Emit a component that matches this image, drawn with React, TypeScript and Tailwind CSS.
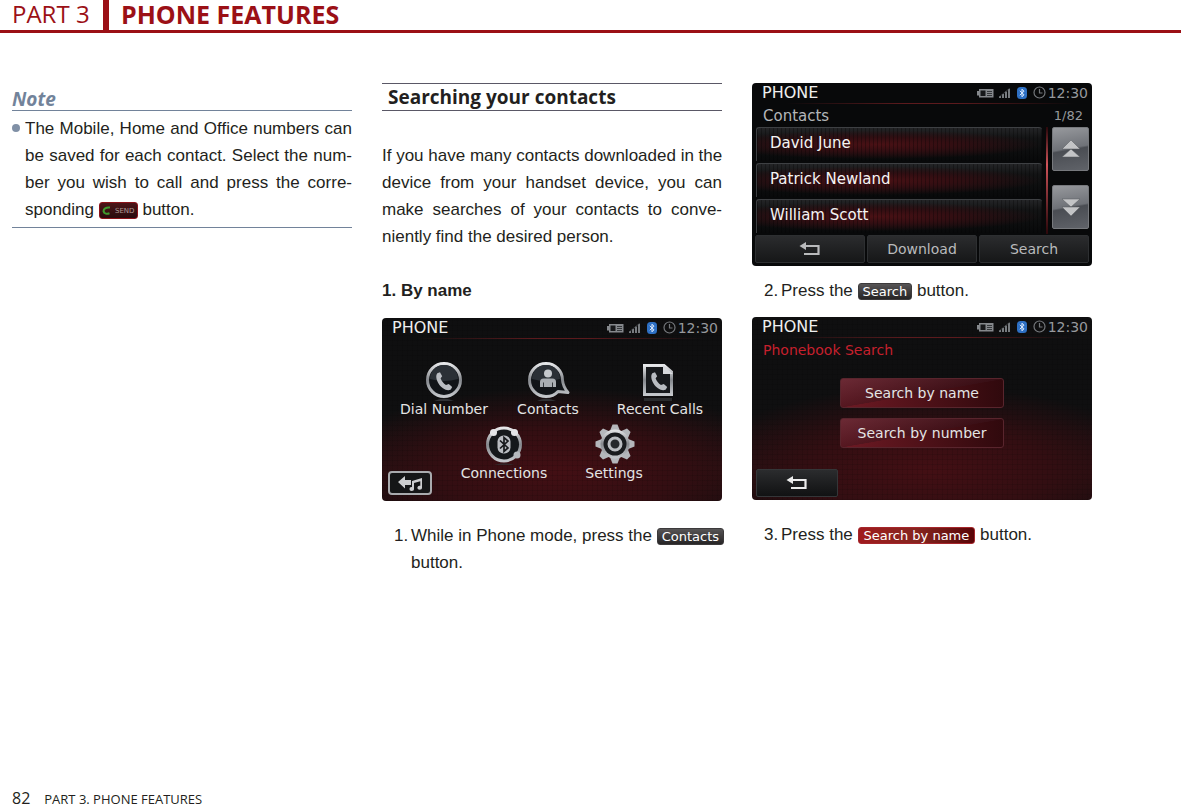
import type { ReactNode } from "react";

const Line = ({ children }: { children: ReactNode }) => (
  <span className="block whitespace-nowrap [text-align-last:justify]">{children}</span>
);

const Key = ({ children, red = false }: { children: ReactNode; red?: boolean }) => (
  <button
    type="button"
    className={
      red
        ? "inline-block h-[17px] rounded-[3px] border border-[#a5262b] bg-linear-to-r from-[#a0191d] via-[#85251f] to-[#5a0508] px-[5px] align-baseline font-['DejaVu_Sans'] text-[13px] leading-[15px] text-white"
        : "inline-block h-[17px] rounded-[3px] border border-[#3c3a3b] bg-linear-to-b from-[#575556] to-[#272526] px-1 align-baseline font-['DejaVu_Sans'] text-[13px] leading-[15px] text-white"
    }
  >
    {children}
  </button>
);

const SendKey = () => (
  <button
    type="button"
    className="inline-flex h-[17px] w-[39px] items-center justify-center gap-1 rounded-[3px] border border-[#8c1219] bg-linear-to-b from-[#4c1518] to-[#2a0b0e] align-baseline font-['DejaVu_Sans'] text-[7px] leading-[8px] text-[#b09a98]"
  >
    <svg className="h-[9px] w-[9px]" viewBox="0 0 9 9" fill="none" stroke="#3f9a2e" strokeWidth="2">
      <path d="M8 1.6C4 1 1.3 3 1.6 5.5C2 7.800 5 8.200 7.500 7.300" />
    </svg>
    SEND
  </button>
);

const Step = ({ n, children }: { n: number; children: ReactNode }) => (
  <div className="flex pl-3">
    <span className="w-[17px] shrink-0">{n}.</span>
    <div className="flex-1">{children}</div>
  </div>
);

const Bluetooth = () => (
  <svg className="h-3 w-[10px]" viewBox="0 0 10 12" fill="none">
    <rect width="10" height="12" rx="3.500" fill="#2e70c4" />
    <path d="M2.800 3.800L7 7.800L5 9.800V2.200L7 4.200L2.800 8.200" stroke="#dcebff" strokeWidth="1" />
  </svg>
);

const StatusBar = () => (
  <div className="flex h-[21px] items-center bg-[linear-gradient(90deg,transparent_10%,#5c1a1d_45%,#5c1a1d_60%,transparent_95%)] bg-[length:100%_1px] bg-bottom bg-no-repeat pb-[2px] pl-[10px] pr-1 font-['DejaVu_Sans']">
    <h3 className="flex-1 text-[16px] leading-[18px] text-[#eeeeee]">PHONE</h3>
    <svg className="h-[10px] w-[17px]" viewBox="0 0 17 10" fill="none">
      <path d="M0 3H2V1H16.500V9.500H2V7.500H0Z" fill="#85888c" />
      <rect x="3.500" y="2.500" width="5" height="5.500" fill="#17181a" />
      <path d="M10 3.500H15M10 5.500H15M10 7.500H15" stroke="#35383b" />
    </svg>
    <svg className="ml-[5px] h-[10px] w-[12px]" viewBox="0 0 12 10" fill="none">
      <path d="M1 8V10M4 6V10M7 3.500V10M10 1V10" stroke="#777b7f" strokeWidth="2" />
      <path d="M0 9L11 0" stroke="#4a4d50" strokeWidth=".7" />
    </svg>
    <div className="ml-[6px]">
      <Bluetooth />
    </div>
    <svg className="ml-[6px] h-[13px] w-[13px]" viewBox="0 0 13 13" fill="none" stroke="#74777b" strokeWidth="1.200">
      <circle cx="6.500" cy="6.500" r="5.500" />
      <path d="M6.500 3V7H9.500" />
    </svg>
    <span className="ml-[2px] text-[14px] leading-[18px] text-[#96999d]">12:30</span>
  </div>
);

const Screen = ({ glow = false, children }: { glow?: boolean; children: ReactNode }) => (
  <div
    className={
      glow
        ? "flex h-[183px] flex-col overflow-hidden rounded-[4px] bg-[#0f0f10] bg-[repeating-linear-gradient(90deg,rgba(0,0,0,0.1)_0_1px,transparent_1px_5px),repeating-linear-gradient(0deg,rgba(0,0,0,0.1)_0_1px,transparent_1px_5px),radial-gradient(ellipse_70%_46%_at_52%_84%,#430f14_0%,#330e12_50%,transparent_100%),linear-gradient(180deg,#0f0f10_55%,#201011_85%,#160d0e_100%)] font-['DejaVu_Sans'] text-[#e4e4e4]"
        : "flex h-[183px] flex-col overflow-hidden rounded-[4px] bg-[#08090a] font-['DejaVu_Sans'] text-[#e4e4e4]"
    }
  >
    <StatusBar />
    {children}
  </div>
);

const ReturnArrow = () => (
  <svg className="h-[14px] w-[22px]" viewBox="0 0 22 14" fill="none">
    <path d="M5 4H19.500V12H5" stroke="currentColor" strokeWidth="2.200" />
    <path d="M0.500 4L7 0V8Z" fill="currentColor" />
  </svg>
);

const ScrollKey = ({ down = false }: { down?: boolean }) => (
  <button
    type="button"
    aria-label={down ? "Next page" : "Previous page"}
    className="flex h-[44px] w-[37px] items-center justify-center rounded-[2px] border border-[#77797d] bg-[linear-gradient(170deg,#97999d_0%,#6f7278_48%,#4a4d53_52%,#606369_100%)]"
  >
    <svg className="h-[18px] w-[18px]" viewBox="0 0 18 18">
      <path
        d={down ? "M0 1H18L9 9ZM0 9H18L9 18Z" : "M0 9L9 0L18 9ZM0 17L9 9L18 17Z"}
        fill="#c3c4c6"
        stroke="#55585d"
        strokeWidth=".5"
      />
    </svg>
  </button>
);

const names = ["David June", "Patrick Newland", "William Scott"];

const ContactsScreen = () => (
  <Screen>
    <div className="flex h-[23px] items-center justify-between pl-[11px] pr-[9px] text-[#b4b6b9]">
      <span className="text-[15px] leading-[20px]">Contacts</span>
      <span className="text-[13px] leading-[20px] text-[#96999d]">1/82</span>
    </div>
    <div className="flex h-[107px] pl-1 pr-[3px]">
      <ul className="flex flex-1 flex-col gap-[2px]">
        {names.map((name) => (
          <li
            key={name}
            className="flex h-[34px] items-center rounded-t-[3px] border-t border-l border-[#3e4043] bg-[repeating-linear-gradient(90deg,rgba(0,0,0,0.3)_0_1px,transparent_1px_4px),radial-gradient(ellipse_58%_44%_at_42%_50%,#4a1115_0%,#330e12_45%,transparent_100%),linear-gradient(180deg,#242527_0%,#131415_30%,#08090a_100%)] pb-1 pl-[13px] text-[15px] leading-[20px] text-[#f4f4f4]"
          >
            {name}
          </li>
        ))}
      </ul>
      <div className="ml-[4px] mr-[4px] w-[2px] bg-linear-to-b from-[#2b080b] via-[#d0545a] via-35% to-[#2b080b]" />
      <div className="flex flex-col gap-[14px]">
        <ScrollKey />
        <ScrollKey down />
      </div>
    </div>
    <div className="mt-[1px] grid grid-cols-3 gap-[2px] px-[3px] text-[14px] leading-[20px] text-[#b9babc]">
      <button type="button" aria-label="Back" className="flex h-[28px] items-center justify-center rounded-[2px] border border-[#2d2f31] bg-linear-to-b from-[#2b2c2e] to-[#161718]">
        <ReturnArrow />
      </button>
      <button type="button" className="h-[28px] rounded-[2px] border border-[#2d2f31] bg-linear-to-b from-[#2b2c2e] to-[#161718]">
        Download
      </button>
      <button type="button" className="h-[28px] rounded-[2px] border border-[#2d2f31] bg-linear-to-b from-[#2b2c2e] to-[#161718]">
        Search
      </button>
    </div>
  </Screen>
);

const HANDSET =
  "M14.300 13.200L17 12.300L19.200 16.200L17.600 18.300C18.500 21 20.500 23.500 23 25L25.800 24L29.200 27L27.800 29.600C24 31.500 18.500 28.500 15.500 23.500C13.200 19.600 12.500 15.500 14.300 13.200Z";

const Metal = ({ id }: { id: string }) => (
  <defs>
    <linearGradient id={id} x1="0" y1="0" x2="0" y2="1">
      <stop offset="0" stopColor="#e6e7e9" />
      <stop offset=".5" stopColor="#85888d" />
      <stop offset="1" stopColor="#c4c7cb" />
    </linearGradient>
  </defs>
);

const DialIcon = () => (
  <svg className="h-[42px] w-[42px]" viewBox="0 0 42 42">
    <Metal id="dial" />
    <circle cx="21" cy="20" r="16.500" fill="#111418" stroke="url(#dial)" strokeWidth="3" />
    <path d="M7 19A14 14 0 0 1 35 19Q21 23 7 19Z" fill="#2b3036" />
    <path d={HANDSET} fill="#b9bcc1" />
    <path d="M11 41Q21 36 31 41Z" fill="#303134" />
  </svg>
);

const ContactIcon = () => (
  <svg className="h-[42px] w-[46px]" viewBox="0 0 46 42">
    <Metal id="contact" />
    <path d="M21 3.500A16.500 16.500 0 0 1 37.500 20Q38 26.500 43 32.500L33 31.500Q28.500 36.500 21 36.500A16.500 16.500 0 0 1 21 3.500Z" fill="#111418" stroke="url(#contact)" strokeWidth="3" strokeLinejoin="round" />
    <path d="M7 19A14 14 0 0 1 35 19Q21 23 7 19Z" fill="#2b3036" />
    <circle cx="23" cy="13.500" r="4" fill="#c5c8cc" />
    <path d="M15 27V22Q15 18.500 18.500 18.500H27.500Q31 18.500 31 22V27Z" fill="#a9adb2" />
    <path d="M18.500 22.500V27M27.500 22.500V27" stroke="#34383d" />
    <path d="M12 41Q21 36 31 41Z" fill="#303134" />
  </svg>
);

const RecentIcon = () => (
  <svg className="h-[42px] w-[46px]" viewBox="-1 0 46 42">
    <Metal id="recent" />
    <path d="M6.500 5.500H26L33.500 12V34.500H6.500Z" fill="#17191c" stroke="url(#recent)" strokeWidth="3" />
    <path d="M25 5V14H35Z" fill="#d7d9dc" />
    <path d={HANDSET} fill="#b9bcc1" />
    <path d="M6 38H34V41H6Z" fill="#2a2b2d" />
  </svg>
);

const ConnectIcon = () => (
  <svg className="h-[42px] w-[42px]" viewBox="0 0 42 42">
    <Metal id="connect" />
    <circle cx="21" cy="20.500" r="16.500" fill="#15181b" stroke="url(#connect)" strokeWidth="3" />
    <circle cx="10.500" cy="8.500" r="3.500" fill="#e4e5e7" />
    <circle cx="31.500" cy="8.500" r="3.500" fill="#e4e5e7" />
    <circle cx="34" cy="31" r="3.500" fill="#b6b9bd" />
    <rect x="14.500" y="11.500" width="13" height="18" rx="6" fill="#b9bcc1" />
    <path d="M17 16.500L25 24L21 27.500V13.500L25 17L17 24.500" fill="none" stroke="#17191c" strokeWidth="1.700" />
    <path d="M11 41Q21 37.500 31 41Z" fill="#34272a" />
  </svg>
);

const GearIcon = () => (
  <svg className="h-[42px] w-[46px]" viewBox="-24 -20 46 42">
    <Metal id="gear" />
    <g fill="#b4b7bb">
      {[0, 45, 90, 135, 180, 225, 270, 315].map((deg) => (
        <path key={deg} d="M-5.500 -12L-2.500 -19.500H2.500L5.500 -12Z" transform={`rotate(${deg})`} />
      ))}
    </g>
    <circle r="14.500" fill="url(#gear)" />
    <circle r="11.500" fill="#191b1e" />
    <circle r="6" fill="#25282b" stroke="#b9bcc0" strokeWidth="3" />
  </svg>
);

const MenuItem = ({ label, children }: { label: string; children: ReactNode }) => (
  <button type="button" className="flex flex-col items-center whitespace-nowrap text-[14px] leading-[14px]">
    {children}
    {label}
  </button>
);

const MenuScreen = () => (
  <Screen glow>
    <div className="mt-[21px] grid grid-cols-[108px_100px_1fr] pl-2">
      <MenuItem label="Dial Number"><DialIcon /></MenuItem>
      <MenuItem label="Contacts"><ContactIcon /></MenuItem>
      <MenuItem label="Recent Calls"><RecentIcon /></MenuItem>
    </div>
    <div className="mt-[8px] flex gap-4 pl-1.5">
      <button type="button" aria-label="Back to music" className="mt-[47px] flex h-[24px] w-[44px] items-center justify-center rounded-[4px] border-2 border-[#a9abae] bg-[#151617]">
        <svg className="h-[15px] w-[25px]" viewBox="0 0 25 15" fill="#cdced0">
          <path d="M0 6L7 0V4H13V9H7V12.500Z" />
          <path d="M14 5L24 2V11.500A2.300 2 0 1 1 22.300 9.800V5.300L16 7V12.700A2.300 2 0 1 1 14 11Z" />
        </svg>
      </button>
      <div className="grid grid-cols-[112px_108px]">
        <MenuItem label="Connections"><ConnectIcon /></MenuItem>
        <MenuItem label="Settings"><GearIcon /></MenuItem>
      </div>
    </div>
  </Screen>
);

const SearchScreen = () => (
  <Screen glow>
    <p className="pl-[11px] pt-[2px] text-[14px] leading-[20px] text-[#c6202d]">Phonebook Search</p>
    <div className="mt-[18px] flex flex-col items-center gap-[10px] text-[14px] leading-[20px]">
      <button type="button" className="h-[30px] w-[164px] rounded-[3px] border border-[#59252d] bg-[linear-gradient(170deg,rgba(105,58,70,0.5)_0%,rgba(60,20,28,0.5)_50%,transparent_51%),linear-gradient(90deg,#6f1a24,#30090d)]">
        Search by name
      </button>
      <button type="button" className="h-[30px] w-[164px] rounded-[3px] border border-[#59252d] bg-[linear-gradient(170deg,rgba(105,58,70,0.5)_0%,rgba(60,20,28,0.5)_50%,transparent_51%),linear-gradient(90deg,#6f1a24,#30090d)]">
        Search by number
      </button>
    </div>
    <button type="button" aria-label="Back" className="mb-[3px] ml-1 mt-auto flex h-[28px] w-[82px] items-center justify-center rounded-[2px] border border-[#343638] bg-linear-to-b from-[#2b2c2e] to-[#111213] text-[#ececec]">
      <ReturnArrow />
    </button>
  </Screen>
);

const App = () => (
  <div className="flex min-h-screen flex-col bg-white font-['Liberation_Sans'] text-[17px] leading-[27px] text-[#231f20]">
    <header className="flex h-[33px] border-b-3 border-[#9b1016] pl-3 font-['Open_Sans'] text-[25px] leading-[28px] text-[#9b1016]">
      <span className="w-[91px] text-[24px]">PART 3</span>
      <h1 className="border-l-6 border-[#9b1016] pl-3 font-bold">PHONE FEATURES</h1>
    </header>

    <main className="grid flex-1 grid-cols-3 gap-[30px] pl-3 pr-[89px] pt-[50px]">
      <section>
        <h2 className="h-[28px] border-b border-[#72839a] pt-[3px] font-['Open_Sans'] text-[19px] leading-[26px] font-bold text-[#72839a] italic">Note</h2>
        <div className="flex border-b border-[#72839a] py-1">
          <span className="mt-[9px] mr-[5px] h-2 w-2 shrink-0 rounded-full bg-[#8090a6]" />
          <p className="flex-1">
            <Line>The Mobile, Home and Office numbers can</Line>
            <Line>be saved for each contact. Select the num-</Line>
            <Line>ber you wish to call and press the corre-</Line>
            sponding <SendKey /> button.
          </p>
        </div>
      </section>

      <section>
        <h2 className="h-[28px] border-y border-[#5a5866] pl-[6px] font-['Open_Sans'] text-[19px] leading-[26px] font-bold">Searching your contacts</h2>
        <p className="mt-[31px]">
          <Line>If you have many contacts downloaded in the</Line>
          <Line>device from your handset device, you can</Line>
          <Line>make searches of your contacts to conve-</Line>
          niently find the desired person.
        </p>
        <h3 className="mt-[27px] mb-[14px] font-bold">1. By name</h3>
        <MenuScreen />
        <div className="mt-[21px]">
          <Step n={1}>
            <Line>While in Phone mode, press the <Key>Contacts</Key></Line>
            button.
          </Step>
        </div>
      </section>

      <section>
        <ContactsScreen />
        <div className="mt-[11px] mb-[13px]">
          <Step n={2}>Press the <Key>Search</Key> button.</Step>
        </div>
        <SearchScreen />
        <div className="mt-[21px]">
          <Step n={3}>Press the <Key red>Search by name</Key> button.</Step>
        </div>
      </section>
    </main>

    <footer className="flex items-baseline gap-[14px] pl-3 font-['Open_Sans'] text-[13px] leading-[16px]">
      <span className="text-[16px]">82</span>
      <span>PART 3. PHONE FEATURES</span>
    </footer>
  </div>
);

export default App;
